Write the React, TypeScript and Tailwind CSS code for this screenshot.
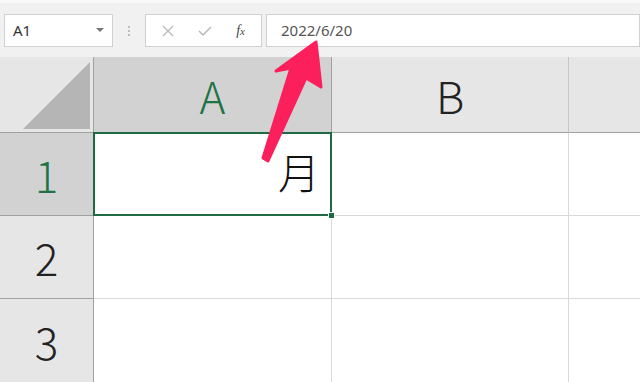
import React from "react";

const font = { fontFamily: '"Noto Sans CJK JP", "Noto Sans", sans-serif' };

const Arrow = () => (
  <svg
    className="absolute left-0 top-0 pointer-events-none"
    width="640"
    height="382"
    viewBox="0 0 640 382"
  >
    <polygon
      points="316,42 321,87 306,78 268,161 263,158 291,68 276,71"
      fill="#fb1f5c"
      stroke="#fb1f5c"
      strokeWidth="3"
      strokeLinejoin="round"
    />
  </svg>
);

const App = () => {
  return (
    <div
      className="relative w-[640px] h-[382px] overflow-hidden bg-[#f1f1f1]"
      style={font}
    >
      {/* top bar */}
      <div className="h-[57px] border-t-[3px] border-[#f8f8f8] flex items-start pt-[11px]">
        <div className="ml-[4px] w-[109px] h-[33px] bg-white border border-[#d0d0d0] flex items-center justify-between pl-[8px] pr-[8px]">
          <span className="text-[15px] text-[#333]" style={{ fontFamily: '"Noto Sans", sans-serif' }}>
            A1
          </span>
          <svg width="8" height="5" viewBox="0 0 8 5">
            <polygon points="0,0 8,0 4,4" fill="#777" />
          </svg>
        </div>
        <div className="w-[32px] h-[33px] flex flex-col items-center justify-center gap-[2px]">
          <span className="w-[2px] h-[2px] bg-[#bdbdbd]" />
          <span className="w-[2px] h-[2px] bg-[#bdbdbd]" />
          <span className="w-[2px] h-[2px] bg-[#bdbdbd]" />
        </div>
        <div className="w-[117px] h-[33px] bg-white border border-[#d0d0d0] flex items-center justify-around px-[4px]">
          <svg width="12" height="12" viewBox="0 0 12 12">
            <path d="M1 1 L11 11 M11 1 L1 11" stroke="#b9b9b9" strokeWidth="1.3" />
          </svg>
          <svg width="14" height="12" viewBox="0 0 14 12">
            <path d="M1 6 L5 10 L13 2" stroke="#b9b9b9" strokeWidth="1.5" fill="none" />
          </svg>
          <span
            className="text-[14px] italic text-[#444]"
            style={{ fontFamily: '"Liberation Serif", serif' }}
          >
            <b className="font-normal">f</b>
            <span className="text-[11px]">x</span>
          </span>
        </div>
        <div className="ml-[4px] flex-1 h-[33px] bg-white border border-[#d0d0d0] flex items-center pl-[14px]">
          <span className="text-[15px] text-[#555]" style={{ fontFamily: '"Noto Sans", sans-serif' }}>
            2022/6/20
          </span>
        </div>
      </div>

      {/* grid */}
      <div className="grid grid-cols-[94px_238px_237px_1fr] grid-rows-[76px_83px_83px_83px] bg-white">
        {/* corner */}
        <div className="relative bg-[#e6e6e6] border-r border-b border-[#a0a0a0]">
          <svg className="absolute right-[3px] bottom-[3px]" width="67" height="67" viewBox="0 0 67 67">
            <polygon points="0,67 67,67 67,0" fill="#b5b5b5" />
          </svg>
        </div>
        <div className="bg-[#d2d2d2] border-r border-b border-[#a0a0a0] flex items-center justify-center text-[44px] font-light text-[#217346]">
          A
        </div>
        <div className="bg-[#e6e6e6] border-r border-b border-[#a0a0a0] border-r-[#c6c6c6] flex items-center justify-center text-[44px] font-light text-[#222]">
          B
        </div>
        <div className="bg-[#e6e6e6] border-b border-[#a0a0a0]" />

        {/* row 1 */}
        <div className="bg-[#d2d2d2] border-r border-b border-[#a0a0a0] flex items-center justify-center text-[44px] font-light text-[#217346]">
          1
        </div>
        <div className="relative border-2 border-[#1e6b43] -ml-[1px] -mt-[1px] flex items-center justify-end pr-[10px] pb-[6px]">
          <span className="text-[42px] font-light text-[#111] leading-none">月</span>
          <span className="absolute -right-[5px] -bottom-[5px] w-[7px] h-[7px] bg-[#1e6b43] border border-white" />
        </div>
        <div className="border-r border-b border-[#d9d9d9]" />
        <div className="border-b border-[#d9d9d9]" />

        {/* row 2 */}
        <div className="bg-[#e6e6e6] border-r border-b border-[#a0a0a0] flex items-center justify-center text-[44px] font-light text-[#222]">
          2
        </div>
        <div className="border-r border-b border-[#d9d9d9]" />
        <div className="border-r border-b border-[#d9d9d9]" />
        <div className="border-b border-[#d9d9d9]" />

        {/* row 3 */}
        <div className="bg-[#e6e6e6] border-r border-[#a0a0a0] flex items-center justify-center text-[44px] font-light text-[#222]">
          3
        </div>
        <div className="border-r border-[#d9d9d9]" />
        <div className="border-r border-[#d9d9d9]" />
        <div />
      </div>

      <Arrow />
    </div>
  );
};

export default App;
